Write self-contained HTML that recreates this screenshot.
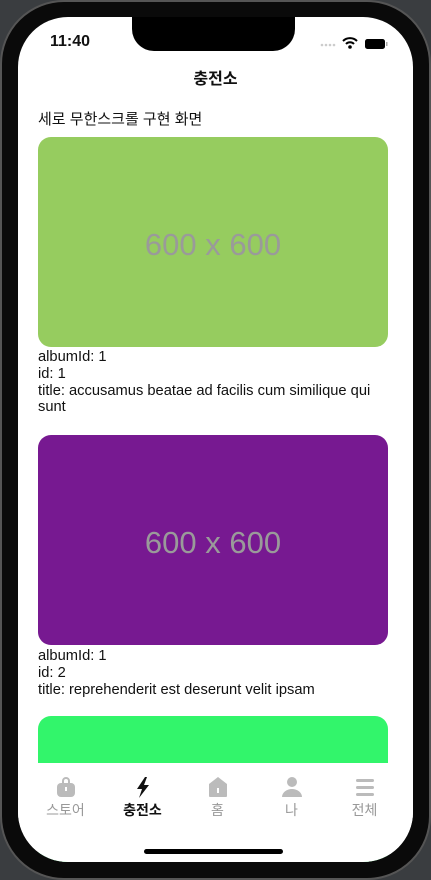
<!DOCTYPE html>
<html><head><meta charset="utf-8"><style>
*{margin:0;padding:0;box-sizing:border-box}
html,body{width:431px;height:880px;overflow:hidden;background:#3a3d40}
body{position:relative;font-family:"Liberation Sans","Noto Sans CJK KR",sans-serif}
.frame{position:absolute;left:0;top:0;width:431px;height:880px;border-radius:64px;background:#0a0a0a;border:2px solid #555}
.screen{position:absolute;left:18px;top:17px;width:395px;height:845px;border-radius:50px;background:#fff;overflow:hidden}
.notch{position:absolute;left:114px;top:0;width:163px;height:34px;background:#000;border-radius:0 0 22px 22px}
.time{position:absolute;left:32px;top:16px;font-size:16px;font-weight:bold;color:#111}
.title{position:absolute;left:0;width:395px;top:48px;text-align:center;font-size:16px;font-weight:bold;color:#111}
.sub{position:absolute;left:20px;top:91px;font-size:15px;color:#111}
.card{position:absolute;left:20px;width:350px;height:210px;border-radius:13px;display:flex;align-items:center;justify-content:center;font-size:31px;color:#9a9a9a;padding-top:6px}
.txt{position:absolute;left:20px;width:350px;font-size:14.7px;line-height:16.8px;color:#111}
.tab{position:absolute;left:0;top:746px;width:395px;height:99px;background:#fff}
.it{position:absolute;top:0;width:79px;text-align:center;font-size:14px;color:#999}
.it svg{display:block;margin:13px auto 2px}
.home{position:absolute;left:126px;top:832px;width:139px;height:5px;border-radius:3px;background:#000}
</style></head><body>
<div class="frame"></div>
<div class="screen">
<div class="notch"></div>
<div class="time">11:40</div>
<svg style="position:absolute;left:302px;top:19px" width="72" height="14"><g fill="#ccc"><circle cx="2" cy="9" r="1.3"/><circle cx="6" cy="9" r="1.3"/><circle cx="10" cy="9" r="1.3"/><circle cx="14" cy="9" r="1.3"/></g><path d="M23 5a10 10 0 0 1 14 0M26 8a5.5 5.5 0 0 1 8 0" stroke="#000" stroke-width="2" fill="none"/><circle cx="30" cy="11" r="1.8"/><rect x="45" y="3" width="20" height="10" rx="2.5" fill="#000"/><rect x="66" y="6" width="1.5" height="4" fill="#aaa"/></svg>
<div class="title">충전소</div>
<div class="sub">세로 무한스크롤 구현 화면</div>
<div class="card" style="top:120px;background:#96cc5f">600 x 600</div>
<div class="txt" style="top:332px">albumId: 1<br>id: 1<br>title: accusamus beatae ad facilis cum similique qui sunt</div>
<div class="card" style="top:418px;background:#771991">600 x 600</div>
<div class="txt" style="top:631px">albumId: 1<br>id: 2<br>title: reprehenderit est deserunt velit ipsam</div>
<div class="card" style="top:699px;background:#32f56b"></div>
<div class="tab">
<div class="it" style="left:8px"><svg width="22" height="22" viewBox="0 0 22 22"><path d="M8 7V5a3 3 0 0 1 6 0v2" stroke="#bbb" stroke-width="2" fill="none"/><rect x="2" y="7" width="18" height="14" rx="4" fill="#bbb"/><rect x="10" y="11" width="2" height="4" fill="#fff"/></svg>스토어</div>
<div class="it" style="left:85px;color:#111;font-weight:bold"><svg width="22" height="22" viewBox="0 0 22 22"><path d="M13 1L5 13h5l-3 9 10-13h-5l3-8z" fill="#111"/></svg>충전소</div>
<div class="it" style="left:160px"><svg width="22" height="22" viewBox="0 0 22 22"><path d="M11 1L2 8v12a1 1 0 0 0 1 1h16a1 1 0 0 0 1-1V8z" fill="#bbb"/><rect x="10" y="12" width="2" height="5" fill="#fff"/></svg>홈</div>
<div class="it" style="left:234px"><svg width="22" height="22" viewBox="0 0 22 22"><circle cx="11" cy="6" r="5" fill="#bbb"/><path d="M1 21a10 8 0 0 1 20 0z" fill="#bbb"/></svg>나</div>
<div class="it" style="left:307px"><svg width="22" height="22" viewBox="0 0 22 22"><rect x="2" y="3" width="18" height="3" rx="1.5" fill="#bbb"/><rect x="2" y="10" width="18" height="3" rx="1.5" fill="#bbb"/><rect x="2" y="17" width="18" height="3" rx="1.5" fill="#bbb"/></svg>전체</div>
</div>
<div class="home"></div>
</div>
</body></html>
